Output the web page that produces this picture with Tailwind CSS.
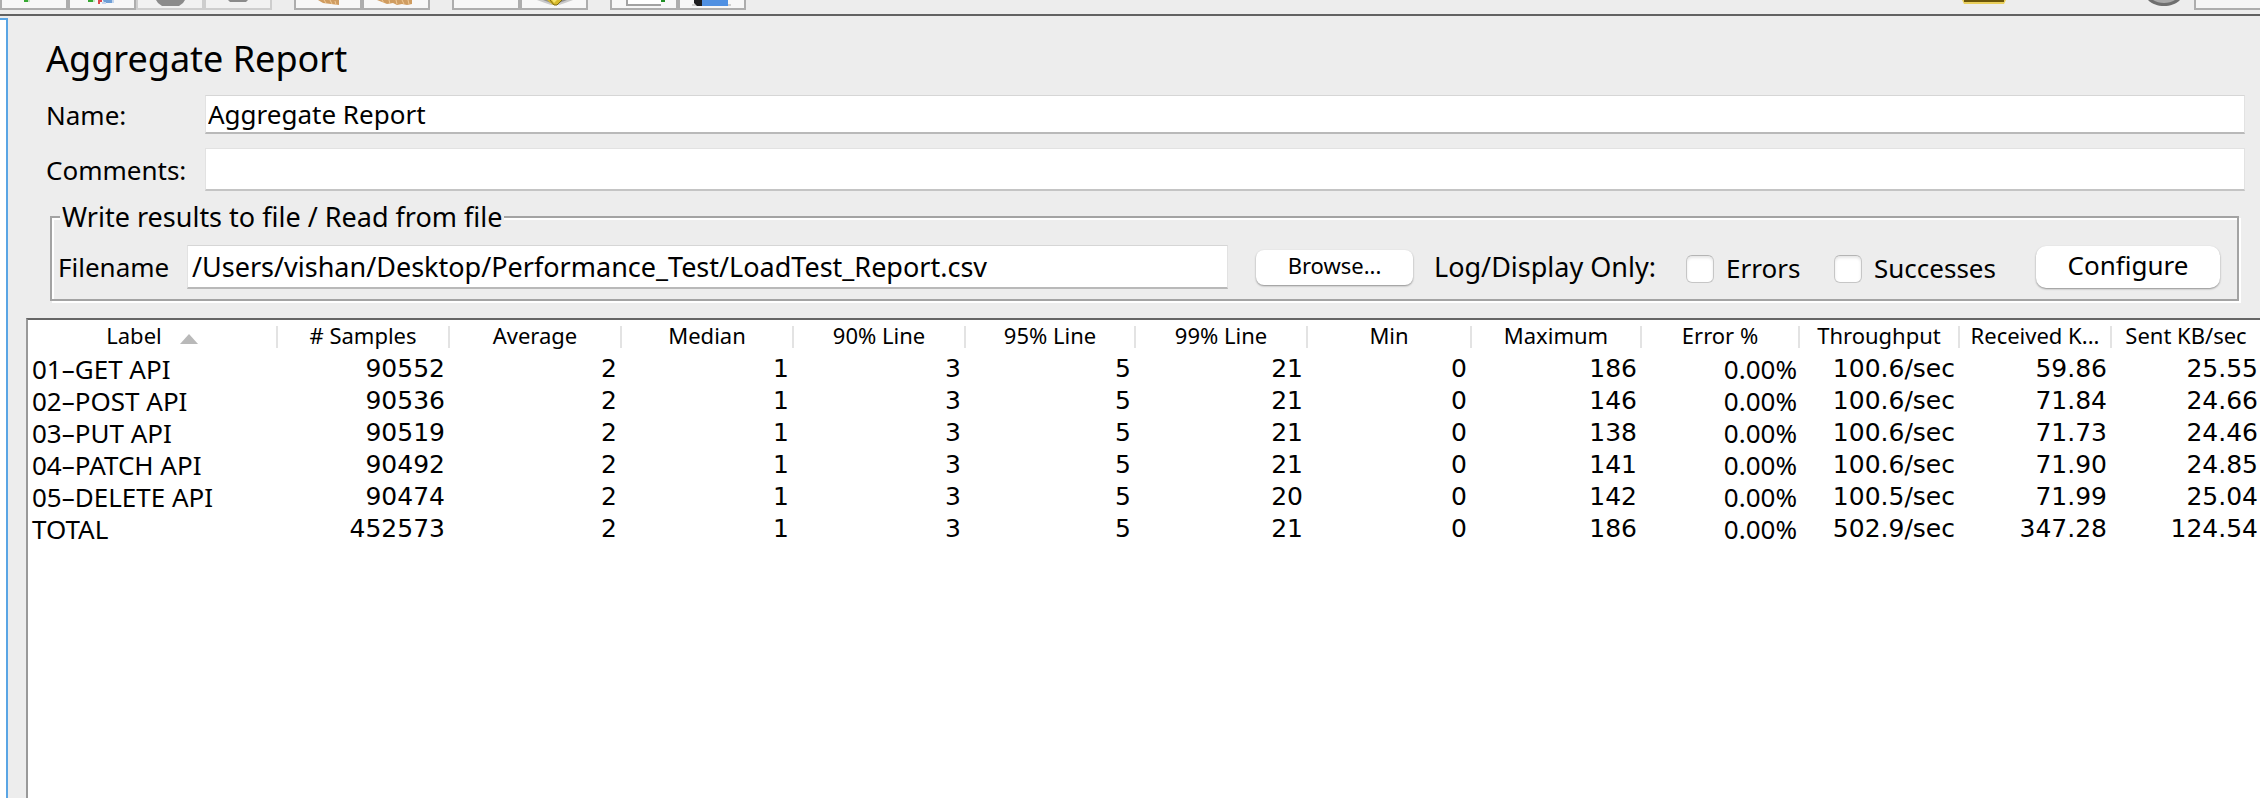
<!DOCTYPE html>
<html lang="en">
<head>
<meta charset="utf-8">
<meta name="viewport" content="width=device-width, initial-scale=1">
<title>Aggregate Report</title>
<script src="https://cdn.jsdelivr.net/npm/@tailwindcss/browser@4"></script>
</head>
<body class="flex h-screen flex-col overflow-hidden bg-[#ededed] font-['Noto_Sans',sans-serif] text-[26px] leading-8 text-black [font-variant-ligatures:none]">

<!-- Toolbar, scrolled so that only its lower edge shows -->
<header class="flex h-4 shrink-0 items-start gap-[22px] border-b-2 border-[#626262]">
  <div class="flex">
    <button type="button" aria-label="Start" class="h-2.5 w-[68px] border-2 border-t-0 border-[#adadad] bg-[#f7f7f7]"><svg class="block h-2 w-16" viewBox="0 0 64 8"><path d="M22 0h4v2h-4z" fill="#36a832"/><path d="M26 0h2v2h-2z" fill="#c4e6c2"/></svg></button>
    <button type="button" aria-label="Start no pauses" class="h-2.5 w-[68px] border-2 border-t-0 border-[#adadad] bg-[#f7f7f7]"><svg class="block h-2 w-16" viewBox="0 0 64 8"><path d="M18 0h5v2h-5z" fill="#36a832"/><path d="M23 0h2v2h-2z" fill="#c4e6c2"/><path d="M28 0h4v2h-2v2h-2z" fill="#e0484c"/><path d="M33 0h11l-2 3h-8z" fill="#6f9fd6"/><path d="M32 2h4v2h-4zM42 0h2v3h-2z" fill="#c3d6ee"/></svg></button>
    <button type="button" aria-label="Stop" disabled class="h-2.5 w-[68px] border-2 border-t-0 border-[#cdcdcd] bg-[#f1f1f1]"><svg class="block h-2 w-16" viewBox="0 0 64 8"><path d="M18 0h29l-2 3-4 3H24l-4-3z" fill="#8b8b8b"/></svg></button>
    <button type="button" aria-label="Shutdown" disabled class="h-2.5 w-[68px] border-2 border-t-0 border-[#cdcdcd] bg-[#f1f1f1]"><svg class="block h-2 w-16" viewBox="0 0 64 8"><path d="M22 0h20l-2 2H24z" fill="#8b8b8b"/></svg></button>
  </div>
  <div class="flex">
    <button type="button" aria-label="Clear" class="h-2.5 w-[68px] border-2 border-t-0 border-[#adadad] bg-[#f7f7f7]"><svg class="block h-2 w-16" viewBox="0 0 64 8"><path d="M22 0h21v5l-8-1-8-1z" fill="#cf9c60"/><path d="M28 0l2 3M34 0l2 4M39 1l1 4" stroke="#f0c894" stroke-width="1"/></svg></button>
    <button type="button" aria-label="Clear all" class="h-2.5 w-[68px] border-2 border-t-0 border-[#adadad] bg-[#f7f7f7]"><svg class="block h-2 w-16" viewBox="0 0 64 8"><path d="M13 0h35v4l-5 1-5-1-5 1-4-2-6 1-5-2z" fill="#cf9c60"/><path d="M18 0l2 3M25 0l1 4M32 0l1 4M38 0l2 4M44 0l1 4" stroke="#f0c894" stroke-width="1"/></svg></button>
  </div>
  <div class="flex">
    <button type="button" aria-label="Search" class="h-2.5 w-[68px] border-2 border-t-0 border-[#adadad] bg-[#f7f7f7]"></button>
    <button type="button" aria-label="Reset search" class="h-2.5 w-[68px] border-2 border-t-0 border-[#adadad] bg-[#f7f7f7]"><svg class="block h-2 w-16" viewBox="0 0 64 8"><path d="M15 0h36l-8 3-6 2h-8l-6-2z" fill="#c9c9c9"/><path d="M21 0h24l-8 3h-8z" fill="#8f8f8f"/><path d="M25 0h15l-5 5h-4z" fill="#d9bb2c"/><path d="M28 0l4 5h3l5-5" fill="none" stroke="#7c6a14"/><path d="M30 0h5l-3 3z" fill="#f6e36a"/></svg></button>
  </div>
  <div class="flex">
    <button type="button" aria-label="Function helper" class="h-2.5 w-[68px] border-2 border-t-0 border-[#adadad] bg-[#f7f7f7]"><svg class="block h-2 w-16" viewBox="0 0 64 8"><path d="M15 0h34v5H15z" fill="#fff"/><path d="M14 0h2v4h33v2H14z" fill="#a2a2a2"/><path d="M49 0h4v2h-4z" fill="#1f8f24"/></svg></button>
    <button type="button" aria-label="Help" class="h-2.5 w-[68px] border-2 border-t-0 border-[#adadad] bg-[#f7f7f7]"><svg class="block h-2 w-16" viewBox="0 0 64 8"><path d="M12 4h39v2H12z" fill="#cfcfcf"/><path d="M14 0h8v6h-5l-3-3z" fill="#1e1e20"/><path d="M22 0h26v6H22z" fill="#4f90e2"/></svg></button>
  </div>
  <div class="ml-auto flex items-start">
    <svg class="mr-[142px] block h-1 w-11" viewBox="0 0 44 4" aria-hidden="true"><path d="M0 0h44l-2 4H2z" fill="#e9cf5c"/><path d="M2 0h40v2H2z" fill="#6b560a"/></svg>
    <svg class="mr-3.5 block h-1.5 w-8" viewBox="0 0 32 6" aria-hidden="true"><path d="M0 0h32c-4 4-10 6-16 6S4 4 0 0z" fill="#6f6f6f"/><path d="M5 0h22c-6 4-16 4-22 0z" fill="#a9a9a9"/></svg>
    <div class="h-2.5 w-[66px] border-b-2 border-l-2 border-[#adadad] bg-[#f5f5f5]"></div>
  </div>
</header>

<div class="flex min-h-0 flex-1">
  <!-- Right edge of the focused tree pane -->
  <aside class="mt-0.5 w-2 shrink-0 border-t-2 border-r-2 border-[#5aa5e4] bg-white"></aside>

  <main class="flex min-w-0 flex-1 flex-col">
    <h1 class="mt-[21px] ml-[38px] text-[36px] leading-[44px]">Aggregate Report</h1>

    <div class="mt-3.5 mr-[15px] ml-[38px] grid grid-cols-[159px_1fr] items-center gap-y-3.5">
      <label for="name">Name:</label>
      <input id="name" type="text" value="Aggregate Report" class="h-[39px] w-full border border-b-2 border-[#e2e2e2] border-t-[#d6d6d6] border-b-[#b9b9b9] bg-white px-0.5 outline-none">
      <label for="comments">Comments:</label>
      <input id="comments" type="text" class="h-[43px] w-full border border-b-2 border-[#e2e2e2] border-b-[#c4c4c4] bg-white px-0.5 outline-none">
    </div>

    <fieldset class="mt-2.5 mr-[21px] ml-[42px] min-w-0 border-2 border-[#a3a3a3] shadow-[2px_2px_0_#fff,inset_2px_2px_0_#fff]">
      <legend class="ml-2 bg-[#ededed] px-0.5 text-[27px]">Write results to file / Read from file</legend>
      <div class="flex items-center pt-3 pr-[17px] pb-2.5 pl-1.5">
        <label for="file" class="w-[129px] shrink-0">Filename</label>
        <input id="file" type="text" value="/Users/vishan/Desktop/Performance_Test/LoadTest_Report.csv" class="h-11 min-w-0 flex-1 border border-b-2 border-[#e2e2e2] border-t-[#d6d6d6] border-b-[#b9b9b9] bg-white px-1 text-[27px] outline-none">
        <button type="button" class="ml-7 h-[35px] w-[157px] rounded-lg bg-white pb-1 text-[22px] leading-7 shadow-[0_1px_2px_rgba(0,0,0,0.4)]">Browse...</button>
        <span class="ml-[21px] w-[252px] text-[27px]">Log/Display Only:</span>
        <label class="flex items-center gap-3"><input type="checkbox" class="mt-1 size-7 appearance-none rounded-md border border-[#c6c6c6] border-t-[#b4b4b4] bg-white shadow-[inset_0_2px_3px_rgba(0,0,0,0.1)]"><span class="mt-0.5 w-[108px]">Errors</span></label>
        <label class="flex items-center gap-3"><input type="checkbox" class="mt-1 size-7 appearance-none rounded-md border border-[#c6c6c6] border-t-[#b4b4b4] bg-white shadow-[inset_0_2px_3px_rgba(0,0,0,0.1)]"><span class="mt-0.5 w-[162px]">Successes</span></label>
        <button type="button" class="h-[42px] w-[184px] rounded-[10px] bg-white pb-1 shadow-[0_1px_2px_rgba(0,0,0,0.4)]">Configure</button>
      </div>
    </fieldset>

    <section class="mt-[17px] ml-[18px] min-h-0 flex-1 overflow-hidden border-t-2 border-l-2 border-[#999] border-t-[#666] bg-white">
      <table class="w-full table-fixed border-collapse whitespace-nowrap">
        <colgroup>
          <col class="w-[250px]"><col class="w-[172px]"><col class="w-[172px]"><col class="w-[172px]"><col class="w-[172px]"><col class="w-[170px]"><col class="w-[172px]"><col class="w-[164px]"><col class="w-[170px]"><col class="w-[158px]"><col class="w-[160px]"><col class="w-[152px]"><col>
        </colgroup>
        <thead class="text-[22px] leading-[18px]">
          <tr id="head" class="h-[33px]"></tr>
        </thead>
        <tbody id="rows" class="font-['DejaVu_Sans',sans-serif] text-[25px]"></tbody>
      </table>
    </section>
  </main>
</div>

<script>
const columns = ['Label', '# Samples', 'Average', 'Median', '90% Line', '95% Line', '99% Line', 'Min', 'Maximum', 'Error %', 'Throughput', 'Received K...', 'Sent KB/sec'];
const results = [
  ['01–GET API', '90552', '2', '1', '3', '5', '21', '0', '186', '0.00%', '100.6/sec', '59.86', '25.55'],
  ['02–POST API', '90536', '2', '1', '3', '5', '21', '0', '146', '0.00%', '100.6/sec', '71.84', '24.66'],
  ['03–PUT API', '90519', '2', '1', '3', '5', '21', '0', '138', '0.00%', '100.6/sec', '71.73', '24.46'],
  ['04–PATCH API', '90492', '2', '1', '3', '5', '21', '0', '141', '0.00%', '100.6/sec', '71.90', '24.85'],
  ['05–DELETE API', '90474', '2', '1', '3', '5', '20', '0', '142', '0.00%', '100.5/sec', '71.99', '25.04'],
  ['TOTAL', '452573', '2', '1', '3', '5', '21', '0', '186', '0.00%', '502.9/sec', '347.28', '124.54']
];
const arrow = '<svg class="ml-[18px] inline-block h-2.5 w-[18px] align-baseline" viewBox="0 0 18 10" aria-hidden="true"><path d="M9 0l9 10H0z" fill="#b9b9b9"/></svg>';
document.getElementById('head').innerHTML = columns.map((name, i) =>
  `<th scope="col" class="p-0 font-normal"><div class="${i < columns.length - 1 ? 'h-[22px] border-r-2 border-[#e3e3e3]' : 'h-[22px]'}">${name}${i ? '' : arrow}</div></th>`).join('');
const cellClass = (value, i, last) => {
  if (i === last) return 'p-0 pr-0.5 text-right';
  if (value.endsWith('%')) return "p-0 pr-[3px] text-right font-['Noto_Sans',sans-serif] text-[26px]";
  return 'p-0 pr-[5px] text-right';
};
document.getElementById('rows').innerHTML = results.map(row =>
  '<tr class="h-8">' + row.map((value, i) => i === 0
    ? `<th scope="row" class="p-0 pl-1 text-left font-['Noto_Sans',sans-serif] text-[26px] leading-[30px] font-normal">${value}</th>`
    : `<td class="${cellClass(value, i, row.length - 1)}">${value}</td>`).join('') + '</tr>').join('');
</script>
</body>
</html>
